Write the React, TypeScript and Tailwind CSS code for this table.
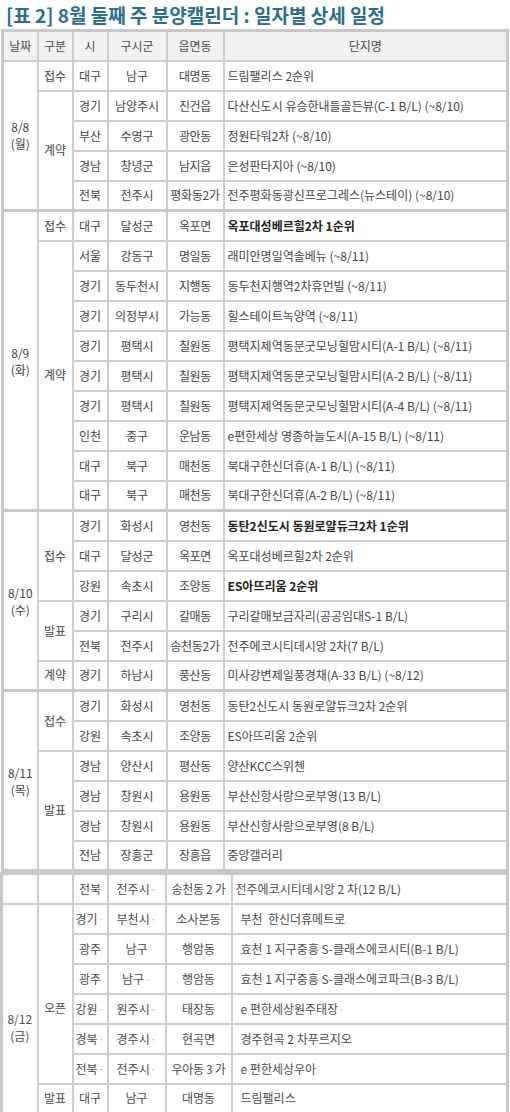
import React from "react"

type Row = {
    kind?: string
    span?: number
    si: string
    gu: string
    dong: string
    name: string
    bold?: boolean
}

type Group = {
    date: string[]
    rows: Row[]
}

const groups: Group[] = [
    {
        date: ["8/8", "(월)"],
        rows: [
            { kind: "접수", span: 1, si: "대구", gu: "남구", dong: "대명동", name: "드림팰리스 2순위" },
            { kind: "계약", span: 4, si: "경기", gu: "남양주시", dong: "진건읍", name: "다산신도시 유승한내들골든뷰(C-1 B/L) (~8/10)" },
            { si: "부산", gu: "수영구", dong: "광안동", name: "정원타워2차 (~8/10)" },
            { si: "경남", gu: "창녕군", dong: "남지읍", name: "은성판타지아 (~8/10)" },
            { si: "전북", gu: "전주시", dong: "평화동2가", name: "전주평화동광신프로그레스(뉴스테이) (~8/10)" },
        ],
    },
    {
        date: ["8/9", "(화)"],
        rows: [
            { kind: "접수", span: 1, si: "대구", gu: "달성군", dong: "옥포면", name: "옥포대성베르힐2차 1순위", bold: true },
            { kind: "계약", span: 9, si: "서울", gu: "강동구", dong: "명일동", name: "래미안명일역솔베뉴 (~8/11)" },
            { si: "경기", gu: "동두천시", dong: "지행동", name: "동두천지행역2차휴먼빌 (~8/11)" },
            { si: "경기", gu: "의정부시", dong: "가능동", name: "힐스테이트녹양역 (~8/11)" },
            { si: "경기", gu: "평택시", dong: "칠원동", name: "평택지제역동문굿모닝힐맘시티(A-1 B/L) (~8/11)" },
            { si: "경기", gu: "평택시", dong: "칠원동", name: "평택지제역동문굿모닝힐맘시티(A-2 B/L) (~8/11)" },
            { si: "경기", gu: "평택시", dong: "칠원동", name: "평택지제역동문굿모닝힐맘시티(A-4 B/L) (~8/11)" },
            { si: "인천", gu: "중구", dong: "운남동", name: "e편한세상 영종하늘도시(A-15 B/L) (~8/11)" },
            { si: "대구", gu: "북구", dong: "매천동", name: "북대구한신더휴(A-1 B/L) (~8/11)" },
            { si: "대구", gu: "북구", dong: "매천동", name: "북대구한신더휴(A-2 B/L) (~8/11)" },
        ],
    },
    {
        date: ["8/10", "(수)"],
        rows: [
            { kind: "접수", span: 3, si: "경기", gu: "화성시", dong: "영천동", name: "동탄2신도시 동원로얄듀크2차 1순위", bold: true },
            { si: "대구", gu: "달성군", dong: "옥포면", name: "옥포대성베르힐2차 2순위" },
            { si: "강원", gu: "속초시", dong: "조양동", name: "ES아뜨리움 2순위", bold: true },
            { kind: "발표", span: 2, si: "경기", gu: "구리시", dong: "갈매동", name: "구리갈매보금자리(공공임대S-1 B/L)" },
            { si: "전북", gu: "전주시", dong: "송천동2가", name: "전주에코시티데시앙 2차(7 B/L)" },
            { kind: "계약", span: 1, si: "경기", gu: "하남시", dong: "풍산동", name: "미사강변제일풍경채(A-33 B/L) (~8/12)" },
        ],
    },
    {
        date: ["8/11", "(목)"],
        rows: [
            { kind: "접수", span: 2, si: "경기", gu: "화성시", dong: "영천동", name: "동탄2신도시 동원로얄듀크2차 2순위" },
            { si: "강원", gu: "속초시", dong: "조양동", name: "ES아뜨리움 2순위" },
            { kind: "발표", span: 4, si: "경남", gu: "양산시", dong: "평산동", name: "양산KCC스위첸" },
            { si: "경남", gu: "창원시", dong: "용원동", name: "부산신항사랑으로부영(13 B/L)" },
            { si: "경남", gu: "창원시", dong: "용원동", name: "부산신항사랑으로부영(8 B/L)" },
            { si: "전남", gu: "장흥군", dong: "장흥읍", name: "중앙갤러리" },
        ],
    },
]

const cell = "border-2 border-[#cdcdcd] h-[30px] p-0 text-center align-middle"
const nameCell = "border-2 border-[#cdcdcd] h-[30px] py-0 pl-[3px] pr-0 text-left align-middle"

const Dot = () => <span className="text-[#bbbbbb]">·</span>

const App = () => {
    return (
        <div
            className="w-[510px] h-[1112px] overflow-hidden bg-white text-[12px] text-[#444]"
            style={{ fontFamily: '"Malgun Gothic", "Noto Sans CJK KR", sans-serif' }}
        >
            <h1 className="h-[29px] pl-[6px] pt-[2px] text-[19px] font-bold leading-[25px] text-[#2a6d8d]">
                [표 2] 8월 둘째 주 분양캘린더 : 일자별 상세 일정
            </h1>

            <table className="w-[508px] ml-px table-fixed border-collapse border-[3px] border-[#c8c8c8]">
                <colgroup>
                    <col className="w-[35px]" />
                    <col className="w-[35px]" />
                    <col className="w-[35px]" />
                    <col className="w-[59px]" />
                    <col className="w-[57px]" />
                    <col />
                </colgroup>
                <thead className="bg-[#f1f1f1] text-[#4a4a4a]">
                    <tr>
                        <th className={cell + " font-normal"}>날짜</th>
                        <th className={cell + " font-normal"}>구분</th>
                        <th className={cell + " font-normal"}>시</th>
                        <th className={cell + " font-normal"}>구시군</th>
                        <th className={cell + " font-normal"}>읍면동</th>
                        <th className={cell + " font-normal"}>단지명</th>
                    </tr>
                </thead>
                {groups.map((g) => (
                    <tbody key={g.date[0]} className="border-b-[3px] border-[#c8c8c8]">
                        {g.rows.map((r, i) => (
                            <tr key={i}>
                                {i === 0 && (
                                    <td rowSpan={g.rows.length} className={cell + " leading-[17px]"}>
                                        {g.date[0]}
                                        <br />
                                        {g.date[1]}
                                    </td>
                                )}
                                {r.kind && (
                                    <td rowSpan={r.span} className={cell}>
                                        {r.kind}
                                    </td>
                                )}
                                <td className={cell}>{r.si}</td>
                                <td className={cell}>{r.gu}</td>
                                <td className={cell + " whitespace-nowrap tracking-[-0.3px]"}>{r.dong}</td>
                                <td className={nameCell + (r.bold ? " font-bold text-[#222]" : "")}>{r.name}</td>
                            </tr>
                        ))}
                    </tbody>
                ))}
            </table>

            <table className="w-[509px] table-fixed border-collapse border-[3px] border-[#c8c8c8] text-[#4a4a4a]">
                <colgroup>
                    <col className="w-[36px]" />
                    <col className="w-[35px]" />
                    <col className="w-[35px]" />
                    <col className="w-[58px]" />
                    <col className="w-[66px]" />
                    <col />
                </colgroup>
                <tbody>
                    <tr>
                        <td className={cell}></td>
                        <td className={cell}></td>
                        <td className={cell}>전북</td>
                        <td className={cell}>
                            전주시<Dot />
                        </td>
                        <td className={cell + " whitespace-nowrap tracking-[-0.3px]"}>송천동 2 가</td>
                        <td className={nameCell}>전주에코시티데시앙 2 차(12 B/L)</td>
                    </tr>
                    <tr>
                        <td rowSpan={7} className={cell + " pt-[38px] leading-[17px]"}>
                            8/12
                            <br />
                            (금)
                        </td>
                        <td rowSpan={6} className={cell + " pt-[28px]"}>
                            오픈
                        </td>
                        <td className={cell}>
                            경기<Dot />
                        </td>
                        <td className={cell}>
                            부천시<Dot />
                        </td>
                        <td className={cell}>소사본동</td>
                        <td className={nameCell + " pl-[8px]"}>부천 &nbsp;한신더휴메트로</td>
                    </tr>
                    <tr>
                        <td className={cell}>광주</td>
                        <td className={cell}>남구</td>
                        <td className={cell}>행암동</td>
                        <td className={nameCell + " pl-[8px]"}>효천 1 지구중흥 S-클래스에코시티(B-1 B/L)</td>
                    </tr>
                    <tr>
                        <td className={cell}>광주</td>
                        <td className={cell}>
                            남구<Dot />
                        </td>
                        <td className={cell}>행암동</td>
                        <td className={nameCell + " pl-[8px]"}>효천 1 지구중흥 S-클래스에코파크(B-3 B/L)</td>
                    </tr>
                    <tr>
                        <td className={cell}>
                            강원<Dot />
                        </td>
                        <td className={cell}>
                            원주시<Dot />
                        </td>
                        <td className={cell}>태장동</td>
                        <td className={nameCell + " pl-[8px]"}>
                            e 편한세상원주태장<Dot />
                        </td>
                    </tr>
                    <tr>
                        <td className={cell}>
                            경북<Dot />
                        </td>
                        <td className={cell}>
                            경주시<Dot />
                        </td>
                        <td className={cell}>현곡면</td>
                        <td className={nameCell + " pl-[8px]"}>경주현곡 2 차푸르지오</td>
                    </tr>
                    <tr>
                        <td className={cell}>
                            전북<Dot />
                        </td>
                        <td className={cell}>
                            전주시<Dot />
                        </td>
                        <td className={cell + " whitespace-nowrap tracking-[-0.3px]"}>우아동 3 가</td>
                        <td className={nameCell + " pl-[8px]"}>e 편한세상우아</td>
                    </tr>
                    <tr>
                        <td className={cell}>발표</td>
                        <td className={cell}>대구</td>
                        <td className={cell}>남구</td>
                        <td className={cell}>대명동</td>
                        <td className={nameCell + " pl-[8px]"}>드림팰리스</td>
                    </tr>
                </tbody>
            </table>
        </div>
    )
}

export default App
